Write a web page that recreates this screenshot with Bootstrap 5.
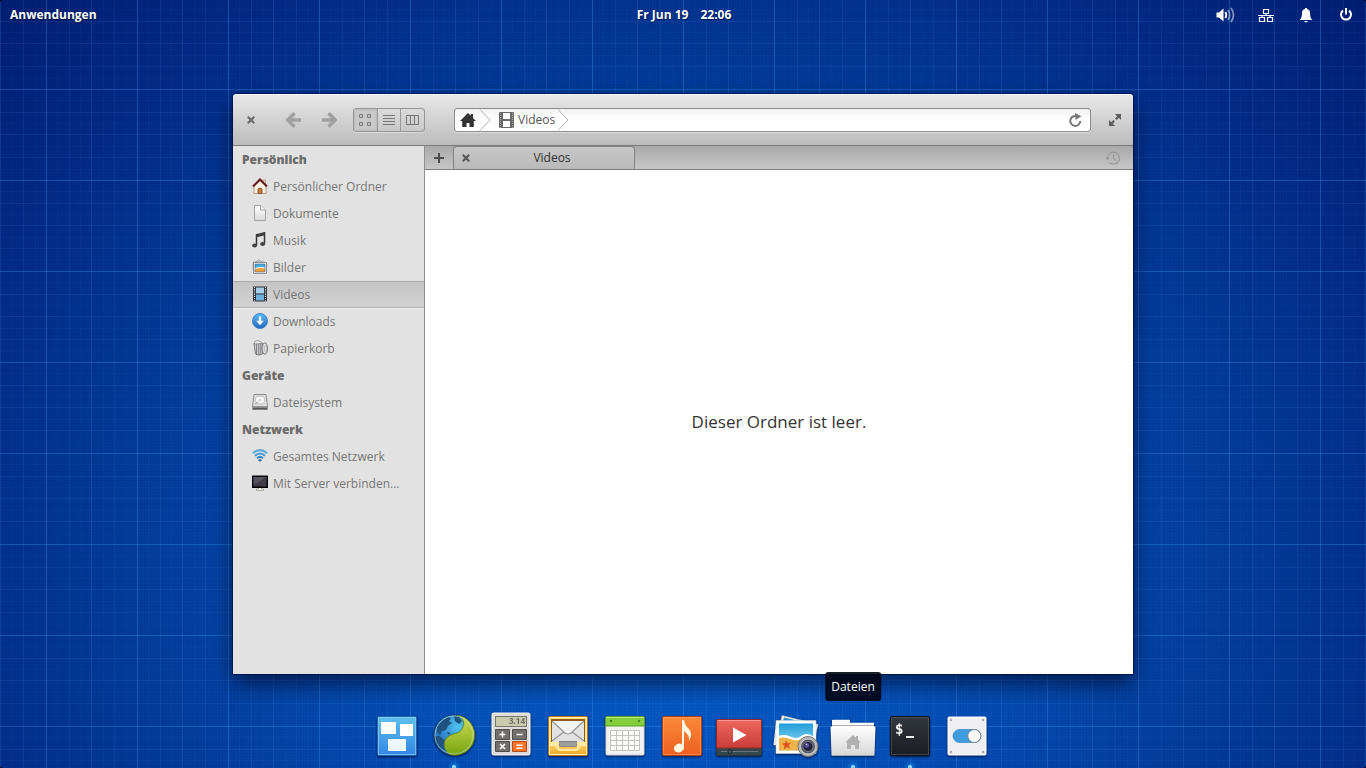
<!DOCTYPE html>
<html lang="de">
<head>
<meta charset="utf-8">
<meta name="viewport" content="width=device-width, initial-scale=1">
<title>Videos</title>
<link href="https://cdn.jsdelivr.net/npm/bootstrap@5.3.0/dist/css/bootstrap.min.css" rel="stylesheet">
<style>
  body { background: #000; font-family: "Open Sans", "Noto Sans", sans-serif; font-size: 12px; line-height: 18px; color: #333; }
  button, a { color: inherit; text-decoration: none; }
  svg { display: block; flex: none; }
  .plain { border: 0; background: none; padding: 0; display: flex; align-items: center; justify-content: center; }

  /* wallpaper: blueprint grid over a blue glow */
  .desktop {
    border-radius: 3px;
    overflow: hidden;
    background-image:
      linear-gradient(90deg, rgba(60,150,235,.34) 1px, transparent 1px 11px, rgba(80,150,240,.03) 11px 12px, transparent 12px 23px, rgba(80,150,240,.1) 23px 24px, transparent 24px 34px, rgba(80,150,240,.03) 34px 35px, transparent 35px 45px, rgba(80,150,240,.17) 45px 46px, transparent 46px 57px, rgba(80,150,240,.03) 57px 58px, transparent 58px 68px, rgba(80,150,240,.1) 68px 69px, transparent 69px 80px, rgba(80,150,240,.03) 80px 81px, transparent 81px),
      linear-gradient(180deg, rgba(60,150,235,.34) 1px, transparent 1px 11px, rgba(80,150,240,.03) 11px 12px, transparent 12px 23px, rgba(80,150,240,.12) 23px 24px, transparent 24px 34px, rgba(80,150,240,.03) 34px 35px, transparent 35px 45px, rgba(80,150,240,.12) 45px 46px, transparent 46px 57px, rgba(80,150,240,.03) 57px 58px, transparent 58px 68px, rgba(80,150,240,.1) 68px 69px, transparent 69px 80px, rgba(80,150,240,.03) 80px 81px, transparent 81px),
      repeating-linear-gradient(90deg, rgba(0,0,50,.04) 0 1px, transparent 1px 3px),
      repeating-linear-gradient(180deg, rgba(0,0,50,.03) 0 1px, transparent 1px 3px),
      radial-gradient(ellipse 62% 95% at 50% 74%, #085fce 0, #0450b8 35%, #033c9c 65%, #022b86 90%, #001a6c 120%);
    background-size: 91px 91px, 91px 91px, auto, auto, auto;
    background-position: 46px 0, 0 89px, 0 0, 0 0, 0 0;
  }

  .panel { height: 30px; padding: 0 10px; color: #fff; font-weight: 700; text-shadow: 0 1px 2px rgba(0,0,0,.6); }
  .panel .plain { color: #fff; font-weight: 700; text-shadow: inherit; gap: 12px; }
  .panel .side { flex: 1 1 0; }
  .indicators { margin-right: -2px; }
  .indicator { width: 24px; height: 24px; }

  .files { max-width: 900px; margin: 64px auto 0; border-radius: 4px 4px 0 0; background: #fff; box-shadow: 0 0 0 1px rgba(0,0,40,.45), 0 10px 22px rgba(0,0,20,.6); }
  .titlebar { height: 52px; padding-top: 1px; gap: 6px; border-radius: 4px 4px 0 0; background: linear-gradient(#e9e9e9, #bbb); border-bottom: 1px solid #7b7b7b; box-shadow: inset 0 1px #f8f8f8; }
  .tool { width: 36px; height: 36px; }
  .viewmode { width: 72px; height: 24px; border: 1px solid #959595; border-radius: 3px; overflow: hidden; box-shadow: 0 1px rgba(255,255,255,.4); }
  .viewmode .plain { flex: 1 1 0; }
  .viewmode .plain + .plain { border-left: 1px solid #999; }
  .viewmode .active { background: #c9c9c9; box-shadow: inset 0 0 3px rgba(0,0,0,.15); }
  .pathbar { height: 24px; margin-left: 23px; border: 1px solid #8e8e8e; border-radius: 3px; background: linear-gradient(#f0f0f0, #fff 40%); box-shadow: 0 1px rgba(255,255,255,.4); }
  .pathbar a { height: 22px; padding-left: 5px; gap: 3px; color: #555; }

  .sidebar { width: 192px; background: #e2e2e2; border-right: 1px solid #8e8e8e; color: #767676; }
  .sidebar h2 { margin: 0; height: 27px; padding-left: 9px; font-size: 12px; line-height: 27px; font-weight: 800; color: #6b6b6b; }
  .place { display: flex; align-items: center; height: 27px; padding-left: 19px; gap: 5px; border-top: 1px solid transparent; border-bottom: 1px solid transparent; }
  .place svg { margin-bottom: 1px; }
  .place.active { background: linear-gradient(#c5c5c5, #d2d2d2); border-top-color: #a9a9a9; border-bottom-color: #b4b4b4; box-shadow: 0 1px #efefef; }

  .tabbar { height: 24px; background: linear-gradient(#a9a9a9, #c6c6c6); border-bottom: 1px solid #7b7b7b; }
  .newtab { width: 28px; height: 23px; }
  .doc { width: 182px; height: 23px; border: 1px solid #848484; border-bottom: 0; border-radius: 4px 4px 0 0; background: linear-gradient(#c6c6c6, #bababa); }
  .doc .plain { width: 24px; height: 22px; }
  .empty { font-size: 17px; line-height: 24px; color: #333; }

  .dock { height: 94px; gap: 9px; padding: 0 2px 8px 0; }
  .launcher { position: relative; width: 48px; height: 48px; }
  .launcher svg { filter: drop-shadow(0 1px 1px rgba(0,0,30,.7)); overflow: visible; }
  .running::after { content: ""; position: absolute; left: 22px; top: 53px; width: 4px; height: 4px; border-radius: 50%; background: #8fd8fb; box-shadow: 0 0 5px 1px #2e9cf0; }
  .hint { position: absolute; bottom: 59px; left: 50%; transform: translateX(-50%); padding: 6px 6px 5px; border-radius: 3px; background: rgba(0,6,20,.9); color: #fff; white-space: nowrap; }
</style>
</head>
<body>
<div class="desktop min-vh-100 d-flex flex-column">

  <header class="panel d-flex align-items-center">
    <div class="side d-flex"><button type="button" class="plain">Anwendungen</button></div>
    <button type="button" class="plain"><span>Fr Jun 19</span><span>22:06</span></button>
    <div class="side indicators d-flex justify-content-end gap-3">
      <button type="button" class="plain indicator" aria-label="Lautstärke">
        <svg width="20" height="16" viewBox="0 0 20 16" fill="none" stroke="#fff" stroke-width="1.800"><path d="M.5 5.500H3L7.500 1.500v13L3 10.500H.5z" fill="#fff" stroke="none"/><path d="M9.300 5q2 3 0 6" /><path d="M12 3q3.300 5 0 10M15 1q5 7 0 14" opacity=".5"/></svg>
      </button>
      <button type="button" class="plain indicator" aria-label="Netzwerk">
        <svg width="16" height="16" viewBox="0 0 16 16" fill="none" stroke="#fff" stroke-width="1.200"><path d="M5.500 2.500h5v4h-5zM1.500 10.500h5v4h-5zM9.500 10.500h5v4h-5zM8 6.500v2M0 8.500h16M4 8.500v2M12 8.500v2"/></svg>
      </button>
      <button type="button" class="plain indicator" aria-label="Benachrichtigungen">
        <svg width="16" height="16" viewBox="0 0 16 16" fill="#fff"><path d="M7 1h2v1q3 .6 3 4 0 4 1 5.500L14.500 13h-13L3 11.500Q4 10 4 6q0-3.400 3-4zM6 14h4l-1 1.200H7z"/></svg>
      </button>
      <button type="button" class="plain indicator" aria-label="Herunterfahren">
        <svg width="16" height="16" viewBox="0 0 16 16" fill="none" stroke="#fff" stroke-width="2"><path d="M5 3.600a5 5 0 1 0 6 0M8 1v6.500"/></svg>
      </button>
    </div>
  </header>

  <main class="files w-100 flex-grow-1 d-flex flex-column">
    <div class="titlebar d-flex align-items-center">
      <button type="button" class="plain tool" aria-label="Schließen"><svg width="8" height="8" viewBox="0 0 8 8" stroke="#666" stroke-width="2"><path d="M.8.8l6.400 6.400M7.200.8L.8 7.200"/></svg></button>
      <div class="d-flex">
        <button type="button" class="plain tool" aria-label="Zurück"><svg width="16" height="16" viewBox="0 0 16 16" fill="none" stroke="#a0a0a0" stroke-width="3.600"><path d="M16 8H3M9.500 1.300L2.800 8l6.700 6.700"/></svg></button>
        <button type="button" class="plain tool" aria-label="Vor"><svg width="16" height="16" viewBox="0 0 16 16" fill="none" stroke="#a0a0a0" stroke-width="3.600"><path d="M1 8h13M7.500 1.300L14.200 8l-6.700 6.700"/></svg></button>
      </div>
      <div class="viewmode d-flex" role="group" aria-label="Ansicht">
        <button type="button" class="plain active" aria-label="Symbole"><svg width="12" height="12" viewBox="0 0 12 12" fill="none" stroke="#777"><path d="M.5.500h3v3h-3zM8.500.500h3v3h-3zM.5 8.500h3v3h-3zM8.500 8.500h3v3h-3z"/></svg></button>
        <button type="button" class="plain" aria-label="Liste"><svg width="12" height="12" viewBox="0 0 12 12" stroke="#777"><path d="M0 1.500h12M0 4.500h12M0 7.500h12M0 10.500h12"/></svg></button>
        <button type="button" class="plain" aria-label="Spalten"><svg width="14" height="12" viewBox="0 0 14 12" fill="none" stroke="#777"><path d="M.5 1.500h12v9H.5zM4.500 1.500v9M8.500 1.500v9"/></svg></button>
      </div>
      <nav class="pathbar flex-grow-1 d-flex align-items-center justify-content-between" aria-label="Pfad">
        <ol class="breadcrumb m-0 d-flex">
          <li><a href="#" class="d-flex align-items-center" aria-label="Persönlicher Ordner">
            <svg width="16" height="16" viewBox="0 0 16 16" fill="#333"><path d="M8 1l2.800 2.800V2H13v4l3 3h-2.200v6H9.500v-4h-3v4H2.200V9H0z"/></svg>
            <svg width="12" height="22" viewBox="0 0 12 22" fill="none" stroke="#b2b2b2"><path d="M1 .5L11 11 1 21.500"/></svg></a></li>
          <li><a href="#" class="d-flex align-items-center ps-2">
            <svg width="16" height="16" viewBox="0 0 16 16"><path d="M1 0h13q1 0 1 1v14q0 1-1 1H1q-1 0-1-1V1q0-1 1-1zM4 1v6h7V1zM4 9v6h7V9z" fill="#696969" fill-rule="evenodd"/><path d="M1.500 1v15M13.500 1v15" stroke="#a8a8a8" stroke-dasharray="1 1"/></svg>
            Videos
            <svg width="12" height="22" viewBox="0 0 12 22" fill="none" stroke="#b2b2b2"><path d="M0 .5L10 11 0 21.500"/></svg></a></li>
        </ol>
        <button type="button" class="plain px-2" aria-label="Neu laden"><svg width="13" height="14" viewBox="0 0 13 14"><path d="M8 3.200A5 5 0 1 0 11.300 8" fill="none" stroke="#777" stroke-width="2"/><path d="M6 0l6.500 3.200L6.500 7z" fill="#777"/></svg></button>
      </nav>
      <button type="button" class="plain tool" aria-label="Maximieren"><svg width="12" height="12" viewBox="0 0 12 12" fill="#5e5e5e"><path d="M6 0h6v6L9.800 3.800 7.600 6 6 4.400l2.200-2.200zM6 12H0V6l2.200 2.200L4.400 6 6 7.600 3.800 9.800z"/></svg></button>
    </div>

    <div class="d-flex flex-grow-1">
      <nav class="sidebar flex-shrink-0" aria-label="Orte">
        <h2>Persönlich</h2>
        <a href="#" class="place"><svg width="16" height="16" viewBox="0 0 16 16"><path d="M11 2h2.500v5H11z" fill="#e6d8cb" stroke="#b49684" stroke-width=".8"/><path d="M2 8l6-5.500L14 8v7.500H2z" fill="#f8eee4" stroke="#ac8a76" stroke-width=".8"/><path d="M6 15.500V11q2-2 4 0v4.500z" fill="#c77a3b" stroke="#7c4422" stroke-width=".8"/><path d="M1 8.500l7-7 7 7" fill="none" stroke="#641a1c" stroke-width="2"/></svg>Persönlicher Ordner</a>
        <a href="#" class="place"><svg width="16" height="16" viewBox="0 0 16 16"><defs><linearGradient id="paper" x2="0" y2="1"><stop stop-color="#fff"/><stop offset="1" stop-color="#d9d9d9"/></linearGradient></defs><path d="M2.500.500H9L13.500 5v10.500h-11z" fill="url(#paper)" stroke="#a1a1a1"/><path d="M8.500.500V5h5" fill="#f7f7f7" stroke="#a9a9a9"/></svg>Dokumente</a>
        <a href="#" class="place"><svg width="16" height="16" viewBox="0 0 16 16"><path d="M4.500 13V2.800L12.500.8V11.500M4.500 4.500l8-1.900" fill="none" stroke="#333" stroke-width="1.500"/><ellipse cx="2.600" cy="13.500" rx="2.500" ry="2" fill="#444"/><ellipse cx="10.600" cy="12" rx="2.500" ry="2" fill="#444"/></svg>Musik</a>
        <a href="#" class="place"><svg width="16" height="16" viewBox="0 0 16 16"><path d="M1 3l10-1 4 3-1 9-13-3z" fill="#eee" stroke="#9b9b9b" stroke-width=".7"/><path d="M4 3l2-2.500L10 3" fill="none" stroke="#8fa3ad" stroke-width=".8"/><path d="M1.500 3.500h13v11h-13z" fill="#fff" stroke="#777" stroke-width=".8"/><path d="M3 5h10v4H3z" fill="#42abe5"/><path d="M3 9q5-1.500 10 0v4H3z" fill="#ee9f35"/><path d="M3 9.500q5-2 10-.5" stroke="#fff" fill="none"/><path d="M3 5h10v8H3z" fill="none" stroke="#526c7b" stroke-width=".7"/></svg>Bilder</a>
        <a href="#" class="place active" aria-current="page"><svg width="16" height="16" viewBox="0 0 16 16"><path d="M1 .5h14v15H1z" fill="#272b30"/><path d="M4 1.500h8v6H4z" fill="#a7cfe7"/><path d="M4 8.500h8v6H4z" fill="#70b0dc"/><path d="M2.500 1v14.500M13.500 1v14.500" stroke="#eee" stroke-width="1.200" stroke-dasharray="1.200 1"/></svg>Videos</a>
        <a href="#" class="place"><svg width="16" height="16" viewBox="0 0 16 16"><defs><linearGradient id="dl" x2="0" y2="1"><stop stop-color="#5cb9f6"/><stop offset="1" stop-color="#2569c2"/></linearGradient></defs><circle cx="8" cy="8" r="7.500" fill="url(#dl)" stroke="#2b71bd" stroke-width=".8"/><path d="M6.800 3.500h2.400v4.200h2.600L8 12.200 4.200 7.700h2.600z" fill="#fff"/></svg>Downloads</a>
        <a href="#" class="place"><svg width="16" height="16" viewBox="0 0 16 16"><path d="M2 3.500h8.500v10.500q-3.500 2.200-7 0z" fill="#ccc" stroke="#757575" stroke-width=".9"/><path d="M4.500 4v11M6.700 4v11M8.700 4v11" stroke="#808086"/><path d="M2 4q0-3 3-3.500 4 .5 5.500 3z" fill="#eee" stroke="#858585" stroke-width=".8"/><ellipse cx="12.800" cy="8.500" rx="2.700" ry="5.700" fill="#ddd" stroke="#6d6d72"/><ellipse cx="13.400" cy="8.500" rx="1" ry="2.700" fill="#f5f5f5" stroke="#999" stroke-width=".7"/></svg>Papierkorb</a>
        <h2>Geräte</h2>
        <a href="#" class="place"><svg width="16" height="16" viewBox="0 0 16 16"><path d="M2 .5h12L15.500 12v3.500H.5V12z" fill="#dedede" stroke="#858585" stroke-width=".9"/><ellipse cx="8" cy="6" rx="5" ry="4" fill="#f8f8f8" stroke="#bbb"/><ellipse cx="8" cy="6" rx="1.500" ry="1" fill="#ccc"/><path d="M3 10.500l3-3" stroke="#999"/><path d="M.5 12h15v3.500H.5z" fill="#999"/><path d="M1 14.500h14" stroke="#555" stroke-width="1.500"/></svg>Dateisystem</a>
        <h2>Netzwerk</h2>
        <a href="#" class="place"><svg width="16" height="16" viewBox="0 0 16 16" fill="none" stroke="#3389c9" stroke-width="2"><path d="M.8 5.300Q8-1 15.200 5.300" stroke="#58aadd"/><path d="M3 7.800q5-4.500 10 0" stroke="#4499d3"/><path d="M5 10.200q3-2.600 6 0"/><path d="M6.500 12q1.500-1 3 0L8 13.500z" fill="#236dab" stroke="#236dab" stroke-width=".8"/></svg>Gesamtes Netzwerk</a>
        <a href="#" class="place"><svg width="16" height="16" viewBox="0 0 16 16"><path d="M6.500 12h3v2h2v1.500h-7V14h2z" fill="#f1f1eb" stroke="#97978f" stroke-width=".7"/><path d="M.7 1.200h14.600v11H.7z" fill="#403c46" stroke="#050505" stroke-width="1.400"/><path d="M1.500 2h13l-13 8z" fill="#67636d" opacity=".6"/></svg>Mit Server verbinden...</a>
      </nav>

      <section class="flex-grow-1 d-flex flex-column">
        <div class="tabbar d-flex align-items-center">
          <button type="button" class="plain newtab" aria-label="Neuer Reiter"><svg width="10" height="10" viewBox="0 0 10 10" stroke="#4b4b4b" stroke-width="2"><path d="M0 5h10M5 0v10"/></svg></button>
          <div class="doc d-flex align-items-center pe-2">
            <button type="button" class="plain" aria-label="Reiter schließen"><svg width="8" height="8" viewBox="0 0 8 8" stroke="#555" stroke-width="2"><path d="M.8.8l6.400 6.400M7.200.8L.8 7.200"/></svg></button>
            <span class="flex-grow-1 text-center">Videos</span>
          </div>
          <button type="button" class="plain ms-auto me-2 px-1" aria-label="Verlauf"><svg width="16" height="16" viewBox="0 0 16 16" fill="none" stroke="#999" stroke-width="1.200"><path d="M2.500 8a6 6 0 1 1 2 4.700M8.500 4.500V8.500l2.500 2"/><path d="M.3 7.500h4.500L2.500 10.500z" fill="#999" stroke="none"/></svg></button>
        </div>
        <div class="empty flex-grow-1 d-flex align-items-center justify-content-center">Dieser Ordner ist leer.</div>
      </section>
    </div>
  </main>

  <footer class="dock d-flex align-items-end justify-content-center">
    <button type="button" class="plain launcher" aria-label="Arbeitsflächen">
      <svg width="48" height="48" viewBox="0 0 48 48"><defs><linearGradient id="sky" x2="0" y2="1"><stop stop-color="#5ec0ec"/><stop offset="1" stop-color="#3385e6"/></linearGradient></defs><rect x="4.500" y="4.500" width="39" height="39" rx="1.500" fill="url(#sky)" stroke="#2462ae"/><rect x="5.500" y="5.500" width="37" height="37" fill="none" stroke="#86d2f5" opacity=".7"/><path d="M8 10h15v12H8zM27 12h13v12H27z" fill="#fff"/><path d="M15 27h18v12H15z" fill="#eef8fc"/></svg>
    </button>
    <button type="button" class="plain launcher running" aria-label="Internet">
      <svg width="48" height="48" viewBox="0 0 48 48"><defs><radialGradient id="sea" cx=".6" cy=".3"><stop stop-color="#4fc4f2"/><stop offset="1" stop-color="#2a7cc6"/></radialGradient><linearGradient id="lime" x2="0" y2="1"><stop stop-color="#d0dc58"/><stop offset="1" stop-color="#77a50f"/></linearGradient></defs><circle cx="24" cy="23" r="20" fill="url(#sea)" stroke="#1b4875"/><path d="M7 15l5-6 6-4 3 1-2 3 3 2-4 3-2 4-4 1-2 4-3-3zM24 4l5 1 3 4-3 3-4-3zM4.500 24l5 0 5 4-1 6 2 5-5-3-5-6zM17 20l4 1-3 2z" fill="#1f527e"/><path d="M27 3.300C32 5 34.500 9 33.500 13c-1 5-4 7.500-8 8.500-7 1.500-11 5-11.200 10.500-.1 4.500 2 8 5.700 10.600A20 20 0 1 0 27 3.300z" fill="url(#lime)" stroke="#5c7d10" stroke-width=".8"/><circle cx="24" cy="23" r="19" fill="none" stroke="#d3ebe5" opacity=".5"/></svg>
    </button>
    <button type="button" class="plain launcher" aria-label="Taschenrechner">
      <svg width="48" height="48" viewBox="0 0 48 48"><rect x="5" y="1" width="38" height="42" rx="1.500" fill="#dedcda" stroke="#f5f5f5"/><rect x="8.500" y="4.500" width="31" height="10" fill="#c9cbae" stroke="#76766a"/><text x="38" y="12" text-anchor="end" font-family="Open Sans, sans-serif" font-size="8" font-weight="700" fill="#6d6e60">3.14</text><path d="M8.500 17.500h14v10h-14zM25.500 17.500h14v10h-14zM8.500 29.500h14v10h-14z" fill="#72706e" stroke="#504e4c"/><path d="M25.500 29.500h14v10h-14z" fill="#f5752a" stroke="#b84a12"/><path d="M12.500 22.500h6M15.500 19.500v6M29.500 22.500h6M13 32l5 5M18 32l-5 5M29.500 33.200h6M29.500 36.200h6" stroke="#fff" stroke-width="1.600"/></svg>
    </button>
    <button type="button" class="plain launcher" aria-label="E-Mail">
      <svg width="48" height="48" viewBox="0 0 48 48"><defs><linearGradient id="gold" x2="0" y2="1"><stop stop-color="#ffdc72"/><stop offset=".6" stop-color="#ffe794"/><stop offset="1" stop-color="#efa51c"/></linearGradient></defs><rect x="4.500" y="4.500" width="39" height="39" rx="1.500" fill="url(#gold)" stroke="#bc750f"/><path d="M5.500 42.500v-37h37v37z" fill="none" stroke="#fff1b4"/><path d="M7 7h34v23H7z" fill="#915b1b"/><path d="M8 9h32v21H8z" fill="#e2e2e2"/><path d="M8 9h32L27 21q-3 2-6 0z" fill="#f3f3f3"/><path d="M8 9l13 12q3 2 6 0L40 9M8 29l12-9M40 29l-12-9" fill="none" stroke="#969696" stroke-width="1.200"/><path d="M5.500 30h9v4q0 3 3 3h13q3 0 3-3v-4h9v4l-6 0q-1 5-5 5h-15q-4 0-5-5H5.500z" fill="#ffeba6"/><path d="M15 29h18v4q0 2-2 2H17q-2 0-2-2z" fill="#858585"/><path d="M15 31h18M16 33h16" stroke="#b5b5b5"/></svg>
    </button>
    <button type="button" class="plain launcher" aria-label="Kalender">
      <svg width="48" height="48" viewBox="0 0 48 48"><rect x="5" y="5" width="38" height="38" rx="1" fill="#f2f2f2" stroke="#d4d4d4"/><path d="M4.500 14V6q0-1.500 1.500-1.500h36q1.500 0 1.500 1.500v8z" fill="#84ce3d" stroke="#5b9e24"/><path d="M5 5.500h38" stroke="#b6ea7c"/><circle cx="10" cy="9" r="1.200" fill="#487f1b"/><circle cx="38" cy="9" r="1.200" fill="#487f1b"/><path d="M9.500 18.500h29v20h-29zM15.500 18.500v20M21.500 18.500v20M27.500 18.500v20M33.500 18.500v20M9.500 23.500h29M9.500 28.500h29M9.500 33.500h29" fill="#fafafa" stroke="#c4c4bf"/></svg>
    </button>
    <button type="button" class="plain launcher" aria-label="Musik">
      <svg width="48" height="48" viewBox="0 0 48 48"><defs><linearGradient id="amber" x2="0" y2="1"><stop stop-color="#f98b38"/><stop offset="1" stop-color="#ee5f20"/></linearGradient></defs><rect x="4.500" y="4.500" width="39" height="39" rx="1.500" fill="url(#amber)" stroke="#b23e10"/><rect x="5.500" y="5.500" width="37" height="37" fill="none" stroke="#ffae70" opacity=".5"/><path d="M24 8h2q1 6 5 9 4 5 0 12 .5-6-5-10v17h-2z" fill="#fff8e0"/><ellipse cx="21" cy="36" rx="5.200" ry="4.300" transform="rotate(-20 21 36)" fill="#fff8e0"/></svg>
    </button>
    <button type="button" class="plain launcher" aria-label="Videos">
      <svg width="48" height="48" viewBox="0 0 48 48"><defs><linearGradient id="rose" x2="0" y2="1"><stop stop-color="#ed6a5c"/><stop offset="1" stop-color="#cb3b3a"/></linearGradient></defs><rect x="1.500" y="7.500" width="45" height="36" rx="1" fill="#35474b" stroke="#26363a"/><path d="M1.500 36V9q0-1.500 1.500-1.500h42q1.500 0 1.500 1.500v27z" fill="url(#rose)" stroke="#912a2c"/><path d="M2.500 8.500h43" stroke="#f59a8c"/><path d="M18 15.500L31.500 23 18 30.500z" fill="#fff"/><path d="M6 39.500h37" stroke="#65757a"/><circle cx="15" cy="39.500" r="2" fill="#495b60" stroke="#18262a"/></svg>
    </button>
    <button type="button" class="plain launcher" aria-label="Fotos">
      <svg width="48" height="48" viewBox="0 0 48 48"><defs><linearGradient id="beach" x2="0" y2="1"><stop stop-color="#1f9ddb"/><stop offset="1" stop-color="#a4e4f4"/></linearGradient></defs><path d="M10 3.500l36 9-6 26L4 31z" fill="#f3f3f3" stroke="#bbb" stroke-width=".6"/><path d="M12 5.500l30 7-3 9-30-6z" fill="#2b8fc4"/><path d="M4 10L1.500 33 30 37z" fill="#eee"/><path d="M4 8.500h40v33H4z" fill="#fff" stroke="#ccc" stroke-width=".6"/><path d="M7 11.500h34v27H7z" fill="url(#beach)"/><path d="M7 25q6-2 12 1t11-1 11 1v12.500H7z" fill="#efb447"/><path d="M7 25q6-2 12 1t11-1 11 1" fill="none" stroke="#fff" stroke-width="2.400"/><path d="M14 28l1.400 3.200 4-.6-2.700 2.700 1.700 3.400-3.500-1.700-3 2.600.6-3.800-2.800-2 3.500-.6z" fill="#e25020"/><circle cx="36" cy="34.500" r="10" fill="#b5b5b5" stroke="#777"/><circle cx="36" cy="34.500" r="7.500" fill="#5a5a66" stroke="#ddd" stroke-width=".8"/><circle cx="36" cy="34.500" r="5" fill="#22223c" stroke="#7b7b88"/><circle cx="35" cy="33.500" r="2.400" fill="#5c4b9e"/><circle cx="34.500" cy="32.500" r=".8" fill="#dcdcff"/></svg>
    </button>
    <button type="button" class="plain launcher running" aria-label="Dateien" aria-describedby="hint-files">
      <svg width="48" height="48" viewBox="0 0 48 48"><defs><linearGradient id="folder" x2="0" y2="1"><stop stop-color="#fff"/><stop offset="1" stop-color="#d6d6d6"/></linearGradient></defs><path d="M3 15V8.500q0-.8.800-.8h16.400q.8 0 .8.800v2.200h24V15z" fill="#fafafa"/><path d="M3 13.500h42" stroke="#aaa"/><path d="M1.500 14.500h45L45.500 43q0 .7-.7.700H3.200q-.7 0-.7-.7z" fill="url(#folder)"/><path d="M24 23l3 2.800V24h2v3.800l2.800 2.700H30V37h-4v-4h-4v4h-4v-6.500h-1.800z" fill="#b0b0b0"/></svg>
      <span class="hint" id="hint-files" role="tooltip">Dateien</span>
    </button>
    <button type="button" class="plain launcher running" aria-label="Terminal">
      <svg width="48" height="48" viewBox="0 0 48 48"><defs><linearGradient id="night" x2="0" y2="1"><stop stop-color="#34383f"/><stop offset="1" stop-color="#191c22"/></linearGradient></defs><rect x="4.500" y="4.500" width="39" height="39" rx="1.500" fill="url(#night)" stroke="#10131a"/><rect x="5.500" y="5.500" width="37" height="37" fill="none" stroke="#5a5e66" opacity=".6"/><text x="9" y="22" font-family="DejaVu Sans Mono, monospace" font-size="14" font-weight="700" fill="#fff">$</text><path d="M20 25h8" stroke="#eee" stroke-width="2"/></svg>
    </button>
    <button type="button" class="plain launcher" aria-label="Systemeinstellungen">
      <svg width="48" height="48" viewBox="0 0 48 48"><rect x="5" y="5" width="38" height="38" rx="1" fill="#efeff1" stroke="#fff"/><g fill="#aaa"><circle cx="8" cy="8" r="1.200"/><circle cx="40" cy="8" r="1.200"/><circle cx="8" cy="40" r="1.200"/><circle cx="40" cy="40" r="1.200"/></g><rect x="10" y="17.500" width="28" height="13" rx="6.500" fill="#3f9cdf" stroke="#3484c0" stroke-width=".7"/><circle cx="31.300" cy="24" r="6.500" fill="#fafafa" stroke="#777" stroke-width=".8"/></svg>
    </button>
  </footer>
</div>
<script src="https://cdn.jsdelivr.net/npm/bootstrap@5.3.0/dist/js/bootstrap.bundle.min.js"></script>
</body>
</html>
